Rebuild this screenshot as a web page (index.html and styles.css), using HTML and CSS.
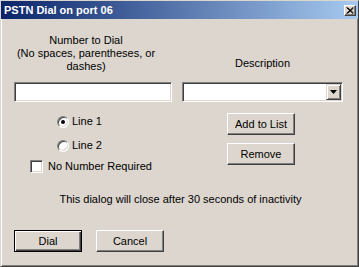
FILE: index.html
```html
<!DOCTYPE html>
<html lang="en">
<head>
    <meta charset="UTF-8">
    <title>PSTN Dial on port 06</title>
    <link rel="stylesheet" href="styles.css">
</head>
<body>
    <div class="window">
        <div class="titlebar">
            <span class="title">PSTN Dial on port 06</span>
            <span class="close">
                <svg width="8" height="7" viewBox="0 0 8 7">
                    <path d="M0.5 0.5 L7 6.5 M1.5 0.5 L7.5 6 M7 0.5 L0.5 6.5 M7.5 1 L1.5 6.5" stroke="#000" stroke-width="1" fill="none"/>
                </svg>
            </span>
        </div>

        <div class="content">
            <div class="fields">
                <div class="label label-number">Number to Dial<br>(No spaces, parentheses, or<br>dashes)</div>
                <div class="label label-desc">Description</div>
                <div class="edit"></div>
                <div class="edit combo">
                    <span class="combo-btn">
                        <svg width="7" height="4" viewBox="0 0 7 4"><path d="M0 0 H7 L3.5 4 Z" fill="#000"/></svg>
                    </span>
                </div>
            </div>

            <div class="options">
                <div class="choices">
                    <div class="radio-row"><span class="radio checked"></span>Line 1</div>
                    <div class="radio-row second"><span class="radio"></span>Line 2</div>
                    <div class="check-row"><span class="checkbox"></span>No Number Required</div>
                </div>
                <div class="side-buttons">
                    <div class="btn">Add to List</div>
                    <div class="btn">Remove</div>
                </div>
            </div>

            <p class="notice">This dialog will close after 30 seconds of inactivity</p>

            <div class="actions">
                <div class="btn btn-default">Dial</div>
                <div class="btn">Cancel</div>
            </div>
        </div>
    </div>
</body>
</html>
```

FILE: styles.css
```css
:root {
    --face: #dcd6ce;
    --shadow: #808080;
    --dark: #404040;
    --light: #ffffff;
}

* {
    margin: 0;
    padding: 0;
    box-sizing: border-box;
}

body {
    background: var(--face);
    font-family: 'Liberation Sans', Arial, sans-serif;
    font-size: 11px;
    line-height: 13px;
    color: #000;
}

.window {
    width: 359px;
    height: 267px;
    display: flex;
    flex-direction: column;
    border: 1px solid;
    border-color: var(--face) var(--dark) var(--dark) var(--face);
    box-shadow: inset 1px 1px var(--light), inset -1px -1px var(--shadow);
    background: var(--face);
}

.titlebar {
    height: 18px;
    display: flex;
    align-items: center;
    justify-content: space-between;
    padding: 0 2px 0 3px;
    background: linear-gradient(to right, #0a246a, #a6caf0);
}

.title {
    color: #fff;
    font-weight: 700;
    font-size: 11px;
    padding-top: 1px;
}

.close {
    width: 12px;
    height: 11px;
    display: flex;
    align-items: center;
    justify-content: center;
    background: var(--face);
    border: 1px solid;
    border-color: var(--light) var(--dark) var(--dark) var(--light);
    box-shadow: inset -1px -1px var(--shadow);
}

.content {
    padding: 15px 14px 0 13px;
}

.fields {
    display: grid;
    grid-template-columns: 158px 161px;
    column-gap: 10px;
    row-gap: 9px;
}

.label {
    text-align: center;
}

.label-number {
    padding-right: 14px;
}

.label-desc {
    align-self: end;
    margin-bottom: 3px;
}

.edit {
    height: 20px;
    background: #fff;
    border: 1px solid;
    border-color: var(--shadow) var(--light) var(--light) var(--shadow);
    box-shadow: inset 1px 1px var(--dark), inset -1px -1px var(--face);
}

.combo {
    display: flex;
    justify-content: flex-end;
    padding: 1px;
}

.combo-btn {
    width: 15px;
    height: 16px;
    display: flex;
    align-items: center;
    justify-content: center;
    background: var(--face);
    border: 1px solid;
    border-color: var(--face) var(--dark) var(--dark) var(--face);
    box-shadow: inset 1px 1px var(--light), inset -1px -1px var(--shadow);
}

.options {
    display: grid;
    grid-template-columns: 158px 161px;
    column-gap: 10px;
    margin-top: 11px;
}

.choices {
    display: flex;
    flex-direction: column;
    padding-top: 2px;
}

.radio-row {
    display: flex;
    align-items: center;
    gap: 3px;
    height: 13px;
    margin-left: 43px;
}

.radio-row.second {
    margin-top: 11px;
}

.radio {
    position: relative;
    width: 12px;
    height: 12px;
    border-radius: 50%;
    background: #fff;
    border: 1px solid;
    border-color: var(--shadow) var(--light) var(--light) var(--shadow);
    box-shadow: inset 1px 1px var(--dark), inset -1px -1px var(--face);
}

.radio.checked::after {
    content: '';
    position: absolute;
    left: 3px;
    top: 3px;
    width: 4px;
    height: 4px;
    border-radius: 50%;
    background: #000;
}

.check-row {
    display: flex;
    align-items: center;
    gap: 5px;
    height: 13px;
    margin: 8px 0 0 16px;
}

.checkbox {
    width: 13px;
    height: 13px;
    background: #fff;
    border: 1px solid;
    border-color: var(--shadow) var(--light) var(--light) var(--shadow);
    box-shadow: inset 1px 1px var(--dark), inset -1px -1px var(--face);
}

.side-buttons {
    display: flex;
    flex-direction: column;
    gap: 8px;
    padding-left: 45px;
}

.btn {
    width: 68px;
    height: 22px;
    display: flex;
    align-items: center;
    justify-content: center;
    background: var(--face);
    border: 1px solid;
    border-color: var(--light) var(--dark) var(--dark) var(--light);
    box-shadow: inset -1px -1px var(--shadow);
}

.btn-default {
    border-color: #000;
    box-shadow: inset 1px 1px var(--light), inset -1px -1px var(--dark), inset -2px -2px var(--shadow);
}

.notice {
    margin-top: 20px;
    padding-left: 3px;
    text-align: center;
}

.actions {
    display: flex;
    gap: 14px;
    margin-top: 24px;
}
```
